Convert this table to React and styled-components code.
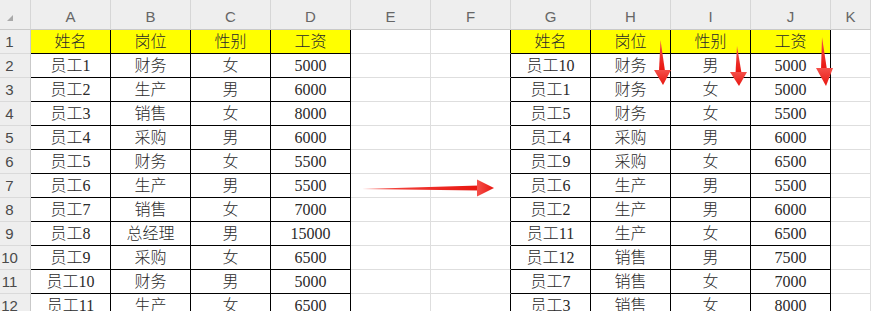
import React from 'react';
import styled, { createGlobalStyle } from 'styled-components';

const Global = createGlobalStyle`
  html, body { margin: 0; padding: 0; background: #fff; overflow: hidden; }
  * { box-sizing: border-box; }
`;

const COLS = ['A', 'B', 'C', 'D', 'E', 'F', 'G', 'H', 'I', 'J', 'K'];

const LEFT = [
  ['姓名', '岗位', '性别', '工资'],
  ['员工1', '财务', '女', '5000'],
  ['员工2', '生产', '男', '6000'],
  ['员工3', '销售', '女', '8000'],
  ['员工4', '采购', '男', '6000'],
  ['员工5', '财务', '女', '5500'],
  ['员工6', '生产', '男', '5500'],
  ['员工7', '销售', '女', '7000'],
  ['员工8', '总经理', '男', '15000'],
  ['员工9', '采购', '女', '6500'],
  ['员工10', '财务', '男', '5000'],
  ['员工11', '生产', '女', '6500'],
];

const RIGHT = [
  ['姓名', '岗位', '性别', '工资'],
  ['员工10', '财务', '男', '5000'],
  ['员工1', '财务', '女', '5000'],
  ['员工5', '财务', '女', '5500'],
  ['员工4', '采购', '男', '6000'],
  ['员工9', '采购', '女', '6500'],
  ['员工6', '生产', '男', '5500'],
  ['员工2', '生产', '男', '6000'],
  ['员工11', '生产', '女', '6500'],
  ['员工12', '销售', '男', '7500'],
  ['员工7', '销售', '女', '7000'],
  ['员工3', '销售', '女', '8000'],
];

const Sheet = styled.div`
  position: relative;
  display: grid;
  grid-template-columns: 31px repeat(10, 80px) 1fr;
  grid-template-rows: 30px repeat(12, 24px);
  width: 871px;
  height: 311px;
  overflow: hidden;
  background: #fff;
  font-family: "Liberation Serif", "Noto Sans CJK SC", serif;
`;

const Corner = styled.div`
  background: #eeeeee;
  border-right: 1px solid #d6d6d6;
  border-bottom: 1px solid #c9c9c9;
  display: flex;
  align-items: flex-start;
  padding: 15px 0 0 7px;
  &::after {
    content: '';
    width: 0;
    height: 0;
    border-left: 6px solid transparent;
    border-bottom: 6px solid #a9a9a9;
  }
`;

const ColHead = styled.div`
  background: #eeeeee;
  border-right: 1px solid #d6d6d6;
  border-bottom: 1px solid #c9c9c9;
  color: #666;
  font-family: "Liberation Sans", Arial, sans-serif;
  font-size: 15px;
  display: flex;
  align-items: center;
  justify-content: center;
  padding-top: 3px;
`;

const RowHead = styled.div`
  background: #eeeeee;
  border-right: 1px solid #c9c9c9;
  border-bottom: 1px solid #dadada;
  color: #4a4a4a;
  font-family: "Liberation Sans", Arial, sans-serif;
  font-size: 15px;
  display: flex;
  align-items: center;
  justify-content: center;
  padding-right: 11px;
`;

const Cell = styled.div`
  background: ${(p) => (p.$head ? '#ffff00' : '#fff')};
  border-right: 1px solid ${(p) => p.$right};
  border-bottom: 1px solid ${(p) => p.$bottom};
  color: #2a2a2a;
  font-size: 16px;
  font-weight: 300;
  line-height: 1;
  display: flex;
  align-items: center;
  justify-content: center;
  white-space: nowrap;
  padding-top: 1px;
`;

const Overlay = styled.svg`
  position: absolute;
  left: 0;
  top: 0;
  pointer-events: none;
`;

const GRID = '#dedede';
const INK = '#000';

function cellContent(row, col) {
  if (col <= 3) return LEFT[row][col];
  if (col >= 6 && col <= 9) return RIGHT[row][col - 6];
  return '';
}

function inTable(col) {
  return (col >= 0 && col <= 3) || (col >= 6 && col <= 9);
}

function Arrows() {
  return (
    <Overlay width="871" height="311" viewBox="0 0 871 311">
      <defs>
        <linearGradient id="hz" x1="0" x2="1" y1="0" y2="0">
          <stop offset="0" stopColor="#f5504a" />
          <stop offset="1" stopColor="#e8150f" />
        </linearGradient>
        <linearGradient id="vt" x1="0" x2="0" y1="0" y2="1">
          <stop offset="0" stopColor="#f5504a" />
          <stop offset="1" stopColor="#e8150f" />
        </linearGradient>
      </defs>
      <g fill="url(#hz)">
        <polygon points="362,189 479,185.5 479,190.5" />
        <polygon points="477,179.5 494,188 477,196.5" />
      </g>
      <g fill="url(#vt)">
        <polygon points="660.5,40 659,71 665,71" />
        <polygon points="654,70 671,70 663,85" />
        <polygon points="737,46 735.5,73 741.5,73" />
        <polygon points="730,72 747,72 739,86" />
        <polygon points="822,37 821,70 827,70" />
        <polygon points="816,68 833,68 826,86" />
      </g>
    </Overlay>
  );
}

export default function App() {
  const cells = [];
  cells.push(<Corner key="corner" />);
  COLS.forEach((c) => cells.push(<ColHead key={`h-${c}`}>{c}</ColHead>));
  for (let r = 0; r < 12; r++) {
    cells.push(<RowHead key={`r-${r}`}>{r + 1}</RowHead>);
    for (let c = 0; c < 11; c++) {
      const table = inTable(c);
      const right = table || c === 5 ? INK : GRID;
      const bottom = table ? INK : GRID;
      cells.push(
        <Cell key={`c-${r}-${c}`} $head={table && r === 0} $right={right} $bottom={bottom}>
          {c < 10 ? cellContent(r, c) : ''}
        </Cell>
      );
    }
  }
  return (
    <>
      <Global />
      <Sheet>
        {cells}
        <Arrows />
      </Sheet>
    </>
  );
}
